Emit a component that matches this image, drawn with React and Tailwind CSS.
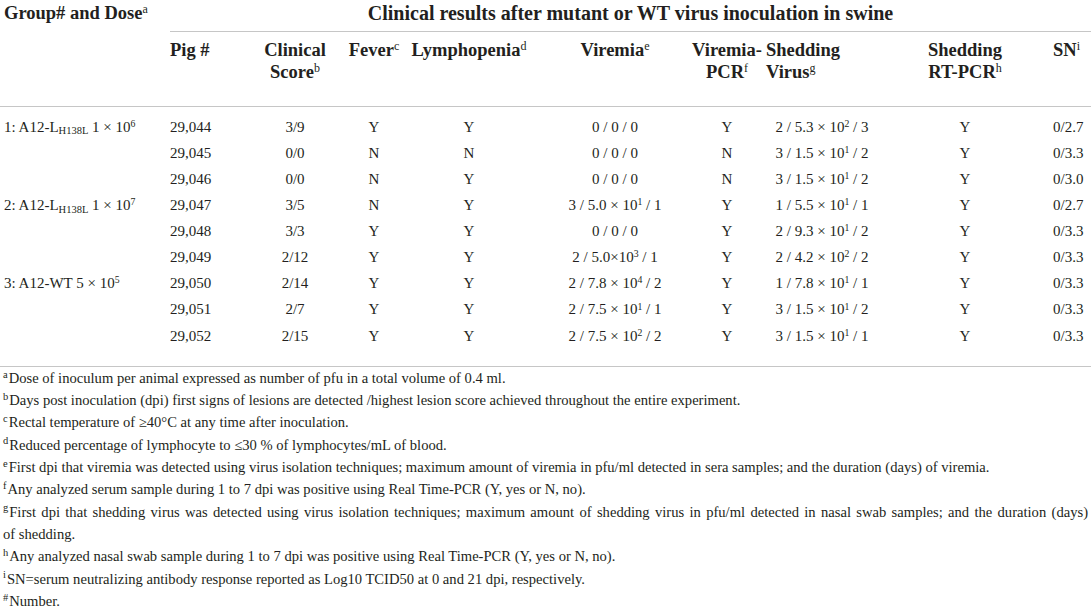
import React from "react";

const cols =
  "grid grid-cols-[170px_85px_80px_78px_112px_180px_44px_146px_140px_56px]";

const rows = [
  { group: "1", pig: "29,044", score: "3/9", fever: "Y", lymph: "Y", vir: ["0 / 0 / 0"], vpcr: "Y", shed: ["2 / 5.3 × 10", "2", " / 3"], spcr: "Y", sn: "0/2.7" },
  { group: "", pig: "29,045", score: "0/0", fever: "N", lymph: "N", vir: ["0 / 0 / 0"], vpcr: "N", shed: ["3 / 1.5 × 10", "1", " / 2"], spcr: "Y", sn: "0/3.3" },
  { group: "", pig: "29,046", score: "0/0", fever: "N", lymph: "Y", vir: ["0 / 0 / 0"], vpcr: "N", shed: ["3 / 1.5 × 10", "1", " / 2"], spcr: "Y", sn: "0/3.0" },
  { group: "2", pig: "29,047", score: "3/5", fever: "N", lymph: "Y", vir: ["3 / 5.0 × 10", "1", " / 1"], vpcr: "Y", shed: ["1 / 5.5 × 10", "1", " / 1"], spcr: "Y", sn: "0/2.7" },
  { group: "", pig: "29,048", score: "3/3", fever: "Y", lymph: "Y", vir: ["0 / 0 / 0"], vpcr: "Y", shed: ["2 / 9.3 × 10", "1", " / 2"], spcr: "Y", sn: "0/3.3" },
  { group: "", pig: "29,049", score: "2/12", fever: "Y", lymph: "Y", vir: ["2 / 5.0×10", "3", " / 1"], vpcr: "Y", shed: ["2 / 4.2 × 10", "2", " / 2"], spcr: "Y", sn: "0/3.3" },
  { group: "3", pig: "29,050", score: "2/14", fever: "Y", lymph: "Y", vir: ["2 / 7.8 × 10", "4", " / 2"], vpcr: "Y", shed: ["1 / 7.8 × 10", "1", " / 1"], spcr: "Y", sn: "0/3.3" },
  { group: "", pig: "29,051", score: "2/7", fever: "Y", lymph: "Y", vir: ["2 / 7.5 × 10", "1", " / 1"], vpcr: "Y", shed: ["3 / 1.5 × 10", "1", " / 2"], spcr: "Y", sn: "0/3.3" },
  { group: "", pig: "29,052", score: "2/15", fever: "Y", lymph: "Y", vir: ["2 / 7.5 × 10", "2", " / 2"], vpcr: "Y", shed: ["3 / 1.5 × 10", "1", " / 1"], spcr: "Y", sn: "0/3.3" },
];

const Sup = ({ children }) => (
  <sup className="text-[65%] font-normal">{children}</sup>
);

const NoteMark = ({ children }) => (
  <sup className="text-[72%] mr-[1px]">{children}</sup>
);

// value like "2 / 5.3 × 10^2 / 3"
const Val = ({ parts }) => (
  <span>
    {parts[0]}
    {parts[1] && <Sup>{parts[1]}</Sup>}
    {parts[2]}
  </span>
);

const GroupLabel = ({ id }) => {
  if (id === "1")
    return (
      <span>
        1: A12-L<sub className="text-[70%]">H138L</sub> 1 × 10<Sup>6</Sup>
      </span>
    );
  if (id === "2")
    return (
      <span>
        2: A12-L<sub className="text-[70%]">H138L</sub> 1 × 10<Sup>7</Sup>
      </span>
    );
  if (id === "3")
    return (
      <span>
        3: A12-WT 5 × 10<Sup>5</Sup>
      </span>
    );
  return null;
};

const Center = ({ children }) => (
  <div className="flex justify-center whitespace-nowrap">{children}</div>
);

const HeadCenter = ({ children }) => (
  <div className="flex flex-col items-center whitespace-nowrap">{children}</div>
);

const notes = [
  ["a", "Dose of inoculum per animal expressed as number of pfu in a total volume of 0.4 ml."],
  ["b", "Days post inoculation (dpi) first signs of lesions are detected /highest lesion score achieved throughout the entire experiment."],
  ["c", "Rectal temperature of ≥40°C at any time after inoculation."],
  ["d", "Reduced percentage of lymphocyte to ≤30 % of lymphocytes/mL of blood."],
  ["e", "First dpi that viremia was detected using virus isolation techniques; maximum amount of viremia in pfu/ml detected in sera samples; and the duration (days) of viremia."],
  ["f", "Any analyzed serum sample during 1 to 7 dpi was positive using Real Time-PCR (Y, yes or N, no)."],
];

const notesEnd = [
  ["h", "Any analyzed nasal swab sample during 1 to 7 dpi was positive using Real Time-PCR (Y, yes or N, no)."],
  ["i", "SN=serum neutralizing antibody response reported as Log10 TCID50 at 0 and 21 dpi, respectively."],
  ["#", "Number."],
];

export default function App() {
  return (
    <div className="w-[1091px] h-[614px] bg-white text-[#231f20] font-['Liberation_Serif',serif] overflow-hidden">
      {/* header row 1 */}
      <div className="flex h-[31px] pt-[2px] text-[18.5px] leading-[23px] font-bold">
        <div className="w-[170px] pl-[4px] whitespace-nowrap">
          Group# and Dose<Sup>a</Sup>
        </div>
        <div className="flex-1 text-center whitespace-nowrap text-[20px]">
          Clinical results after mutant or WT virus inoculation in swine
        </div>
      </div>
      <div className="ml-[170px] h-px bg-[#c6c6c6]" />

      {/* header row 2 */}
      <div className={`${cols} h-[74px] pt-[7px] text-[18.5px] leading-[22px] font-bold`}>
        <div />
        <div className="whitespace-nowrap">Pig #</div>
        <HeadCenter>
          <span>Clinical</span>
          <span>
            Score<Sup>b</Sup>
          </span>
        </HeadCenter>
        <HeadCenter>
          <span>
            Fever<Sup>c</Sup>
          </span>
        </HeadCenter>
        <HeadCenter>
          <span>
            Lymphopenia<Sup>d</Sup>
          </span>
        </HeadCenter>
        <HeadCenter>
          <span>
            Viremia<Sup>e</Sup>
          </span>
        </HeadCenter>
        <HeadCenter>
          <span>Viremia-</span>
          <span>
            PCR<Sup>f</Sup>
          </span>
        </HeadCenter>
        <div className="pl-[17px] flex flex-col whitespace-nowrap">
          <span>Shedding</span>
          <span>
            Virus<Sup>g</Sup>
          </span>
        </div>
        <HeadCenter>
          <span>Shedding</span>
          <span>
            RT-PCR<Sup>h</Sup>
          </span>
        </HeadCenter>
        <div className="pl-[18px] whitespace-nowrap">
          SN<Sup>i</Sup>
        </div>
      </div>
      <div className="h-px bg-[#c6c6c6]" />

      {/* body */}
      <div className="pt-[7px] pb-[17px] text-[15px]">
        {rows.map((r) => (
          <div key={r.pig} className={`${cols} h-[26.1px] items-center`}>
            <div className="pl-[4px] whitespace-nowrap">
              <GroupLabel id={r.group} />
            </div>
            <div>{r.pig}</div>
            <Center>{r.score}</Center>
            <Center>{r.fever}</Center>
            <Center>{r.lymph}</Center>
            <Center>
              <Val parts={r.vir} />
            </Center>
            <Center>{r.vpcr}</Center>
            <Center>
              <Val parts={r.shed} />
            </Center>
            <Center>{r.spcr}</Center>
            <div className="pl-[18px]">{r.sn}</div>
          </div>
        ))}
      </div>
      <div className="h-px bg-[#c6c6c6]" />

      {/* footnotes */}
      <div className="pl-[3px] w-[1088px] text-[14.6px] leading-[22.3px]">
        {notes.map(([k, t]) => (
          <p key={k}>
            <NoteMark>{k}</NoteMark>
            {t}
          </p>
        ))}
        <p className="text-justify [text-align-last:justify]">
          <NoteMark>g</NoteMark>First dpi that shedding virus was detected using virus isolation techniques; maximum
          amount of shedding virus in pfu/ml detected in nasal swab samples; and the duration (days)
        </p>
        <p>of shedding.</p>
        {notesEnd.map(([k, t]) => (
          <p key={k}>
            <NoteMark>{k}</NoteMark>
            {t}
          </p>
        ))}
      </div>
    </div>
  );
}
